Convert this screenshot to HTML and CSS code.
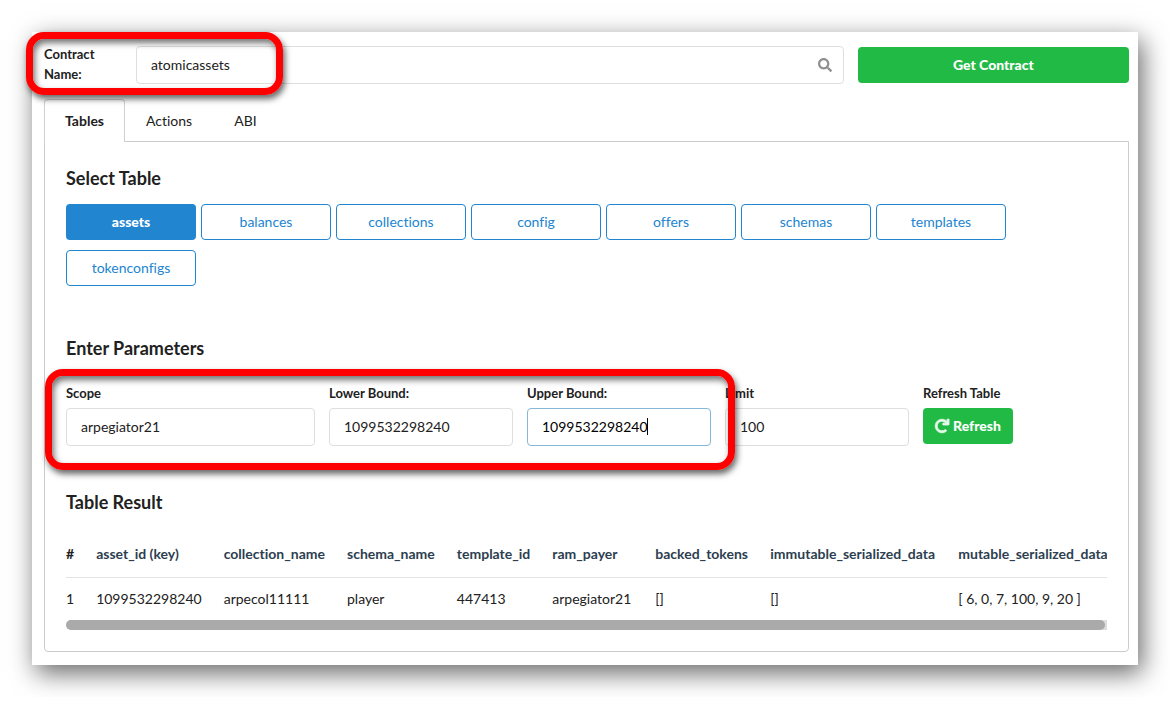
FILE: index.html
```html
<!DOCTYPE html>
<html lang="en">
<head>
<meta charset="utf-8">
<meta name="viewport" content="width=device-width, initial-scale=1">
<title>Contract Tables</title>
<link rel="stylesheet" href="styles.css">
</head>
<body>
<main class="window">
  <form class="search">
    <label class="search-label" for="contract">Contract Name:</label>
    <div class="search-field">
      <input class="input" id="contract" type="text" value="atomicassets">
      <svg class="search-icon" viewBox="0 0 512 512" aria-hidden="true"><path d="M505 442.700L405.300 343c-4.500-4.500-10.600-7-17-7H372c27.600-35.300 44-79.700 44-128C416 93.100 322.900 0 208 0S0 93.100 0 208s93.100 208 208 208c48.300 0 92.700-16.400 128-44v16.300c0 6.400 2.500 12.500 7 17l99.700 99.700c9.400 9.400 24.600 9.400 33.900 0l28.300-28.300c9.400-9.400 9.400-24.600.1-34zM208 336c-70.700 0-128-57.200-128-128 0-70.700 57.200-128 128-128 70.700 0 128 57.200 128 128 0 70.700-57.200 128-128 128z"/></svg>
    </div>
    <button class="button button-green" type="button">Get Contract</button>
    <span class="highlight highlight-search"></span>
  </form>

  <nav class="tabs">
    <a class="tab tab-active" href="#tables">Tables</a>
    <a class="tab" href="#actions">Actions</a>
    <a class="tab" href="#abi">ABI</a>
  </nav>

  <section class="panel" id="tables">
    <h2 class="title">Select Table</h2>
    <div class="table-list">
      <button class="button button-active" type="button">assets</button>
      <button class="button button-outline" type="button">balances</button>
      <button class="button button-outline" type="button">collections</button>
      <button class="button button-outline" type="button">config</button>
      <button class="button button-outline" type="button">offers</button>
      <button class="button button-outline" type="button">schemas</button>
      <button class="button button-outline" type="button">templates</button>
      <button class="button button-outline" type="button">tokenconfigs</button>
    </div>

    <h2 class="title">Enter Parameters</h2>
    <form class="params">
      <div class="field"><label for="scope">Scope</label><input class="input" id="scope" type="text" value="arpegiator21"></div>
      <div class="field"><label for="lower">Lower Bound:</label><input class="input" id="lower" type="text" value="1099532298240"></div>
      <div class="field field-focus"><label for="upper">Upper Bound:</label><input class="input input-focus" id="upper" type="text" value="1099532298240"><span class="caret"></span></div>
      <div class="field"><label for="limit">Limit</label><input class="input" id="limit" type="text" value="100"></div>
      <div class="field"><label for="refresh">Refresh Table</label>
        <button class="button button-green button-refresh" id="refresh" type="button"><svg class="refresh-icon" viewBox="0 0 512 512" aria-hidden="true"><path d="M500.300 0h-47.400c-6.800 0-12.300 5.700-12 12.600l4 82.800C399.400 42 331.800 8 256.300 8 119.300 8 7.900 119.500 8 256.500 8.100 393.700 119.100 504 256 504c63.900 0 122.200-24.200 166.200-63.900 5.100-4.600 5.300-12.400.5-17.300l-34-34c-4.500-4.500-11.700-4.700-16.400-.5C341.200 415.600 300.500 432 256 432c-97.300 0-176-78.700-176-176 0-97.300 78.700-176 176-176 58.500 0 110.300 28.500 142.200 72.500l-101.500-4.900c-6.900-.3-12.600 5.200-12.600 12v47.400c0 6.600 5.400 12 12 12h204.300c6.600 0 12-5.400 12-12V12c-.1-6.600-5.500-12-12.100-12z"/></svg>Refresh</button>
      </div>
      <span class="highlight highlight-params"></span>
    </form>

    <h2 class="title">Table Result</h2>
    <div class="result">
      <table class="data">
        <colgroup>
          <col span="5">
          <col class="col-payer">
          <col class="col-tokens">
          <col class="col-immutable">
          <col>
        </colgroup>
        <thead>
          <tr><th class="index">#</th><th>asset_id (key)</th><th>collection_name</th><th>schema_name</th><th>template_id</th><th>ram_payer</th><th>backed_tokens</th><th>immutable_serialized_data</th><th>mutable_serialized_data</th></tr>
        </thead>
        <tbody>
          <tr><td>1</td><td>1099532298240</td><td>arpecol11111</td><td>player</td><td>447413</td><td>arpegiator21</td><td>[]</td><td>[]</td><td>[ 6, 0, 7, 100, 9, 20 ]</td></tr>
        </tbody>
      </table>
    </div>
    <div class="scroll-track"><div class="scroll-thumb"></div></div>
  </section>
</main>
</body>
</html>
```
FILE: styles.css
```css
* { box-sizing: border-box; }

body {
  margin: 0;
  padding: 32px;
  background: #fff;
  color: #212121;
  font: 14px/20px Lato, "Liberation Sans", sans-serif;
  font-variant-ligatures: none;
}

.window {
  padding: 12px 9px 13px 12px;
  background: #fff;
  box-shadow: 4px 8px 24px rgba(0, 0, 0, .6);
}

.input {
  display: block;
  width: 100%;
  height: 38px;
  padding: 0 14px 2px;
  border: 1px solid #dedede;
  border-radius: 4px;
  background: #fff;
  color: #212121;
  font: inherit;
  outline: 0;
}
.input-focus { border-color: #85b7d9; color: #000; }

.button {
  height: 36px;
  padding: 0 12px;
  border: 0;
  border-radius: 4px;
  font: 14px/20px Lato, "Liberation Sans", sans-serif;
  font-variant-ligatures: none;
  text-align: center;
  cursor: pointer;
}
.button-green { background: #21ba45; color: #fff; font-weight: 900; }
.button-active { background: #2185d0; color: #fff; font-weight: 900; }
.button-outline { border: 1px solid #2185d0; background: #fff; color: #2185d0; }

.search {
  position: relative;
  display: grid;
  grid-template-columns: 78px 1fr 25%;
  gap: 14px;
  align-items: end;
}
.search-label { width: 64px; font-size: 13px; font-weight: 700; }
.search-field { position: relative; }
.search .button { margin-bottom: 1px; }
.search-icon {
  position: absolute;
  top: 12px;
  right: 12px;
  width: 14px;
  height: 14px;
  fill: #909090;
}

.highlight {
  position: absolute;
  z-index: 2;
  border: 7px solid #f00;
  border-radius: 18px;
  box-shadow: 2px 4px 6px rgba(0, 0, 0, .6), inset 2px 4px 6px rgba(0, 0, 0, .55);
  pointer-events: none;
}
.highlight-search { top: -12px; left: -18px; width: 257px; height: 63px; }
.highlight-params { top: -14px; left: -21px; width: 690px; height: 101px; }

.tabs { display: flex; margin-top: 15px; }
.tab {
  height: 43px;
  padding: 11px 20px 0;
  border: 1px solid transparent;
  border-bottom: 0;
  color: #212121;
  text-decoration: none;
}
.tab-active {
  position: relative;
  border-color: #d0d0d0;
  border-radius: 4px 4px 0 0;
  background: #fff;
  font-weight: 700;
}

.panel {
  margin-top: -1px;
  padding: 25px 21px 21px;
  border: 1px solid #ccc;
  border-radius: 0 0 4px 4px;
}

.title { margin: 0; font-size: 18px; font-weight: 700; line-height: 22px; }

.table-list {
  display: flex;
  flex-wrap: wrap;
  gap: 10px 5px;
  margin: 15px 0 51px;
}
.table-list .button { width: 130px; }

.params {
  position: relative;
  display: grid;
  grid-template-columns: 249fr 184fr 184fr 184fr 184fr;
  gap: 14px;
  margin: 24px 0 45px;
}
.field label { display: block; margin-bottom: 5px; font-size: 13px; font-weight: 700; }
.field-focus { position: relative; }
.caret {
  position: absolute;
  right: 63px;
  bottom: 11px;
  width: 1px;
  height: 17px;
  background: #000;
}
.button-refresh { width: 90px; padding: 0; }
.refresh-icon {
  width: 14px;
  height: 14px;
  margin-right: 4px;
  vertical-align: -2px;
  fill: #fff;
  stroke: #fff;
  stroke-width: 30;
  overflow: visible;
  opacity: .9;
}

.result { margin-top: 21px; overflow: hidden; }
.data { width: max-content; border-collapse: collapse; white-space: nowrap; }
.data th, .data td { padding: 10px 11px; text-align: left; }
.data th { padding-bottom: 13px; border-bottom: 1px solid #e4e4e4; color: #2c3e50; font-weight: 700; }
.data td { padding-top: 11px; padding-bottom: 11px; }
.data .index { color: #212121; }
.data th:first-child, .data td:first-child { padding-left: 0; }
.col-payer { width: 103px; }
.col-tokens { width: 115px; }
.col-immutable { width: 188px; }

.scroll-track { padding-right: 2px; background: #ddd; border-radius: 5px 0 0 5px; }
.scroll-thumb { height: 10px; border-radius: 5px; background: #aaa; }
```
